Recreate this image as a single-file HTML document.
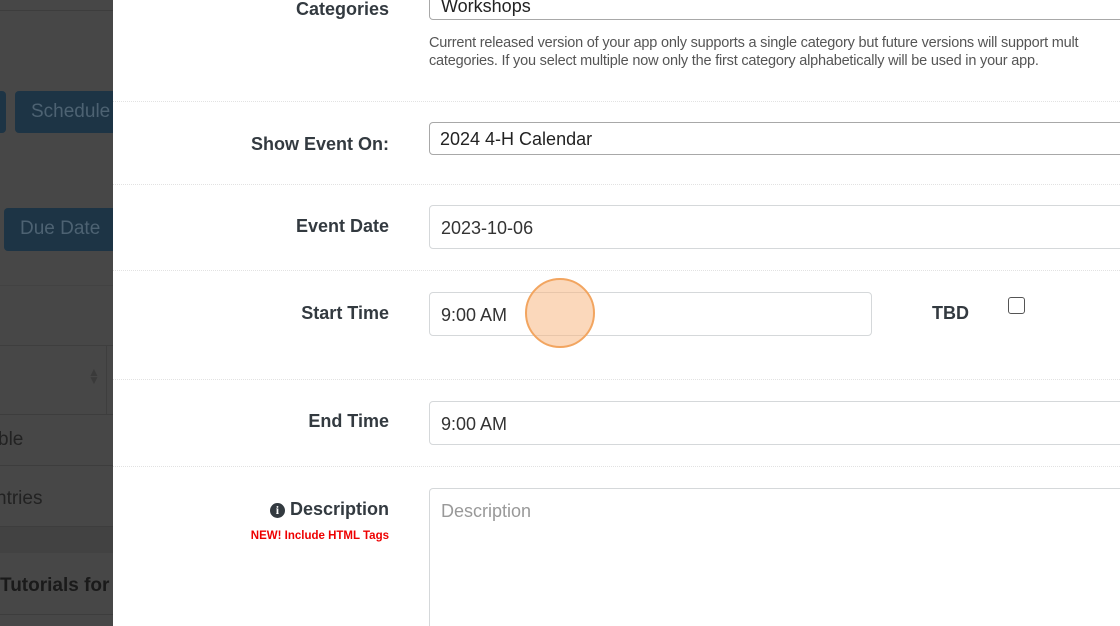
<!DOCTYPE html>
<html style="margin:0;width:1120px;height:626px;overflow:hidden"><head><style>
body{margin:0;width:1120px;height:626px;overflow:hidden;background:#fff;font-family:"Liberation Sans",sans-serif;position:relative}
.a{position:absolute}
.left{left:0;top:0;width:113px;height:626px;background:#474747;overflow:hidden}
.btn{position:absolute;background:#1d3445;color:#4d6272;font-size:19px;border-radius:4px;line-height:42px}
.lbl{position:absolute;right:731px;font-weight:bold;color:#333a40;font-size:18px;text-align:right;white-space:nowrap}
.inp{position:absolute;left:429px;right:-10px;border:1px solid #d5d8da;border-radius:4px;font-size:18px;color:#333;padding-left:11px;box-sizing:border-box}
.sep{position:absolute;left:113px;right:0;border-top:1px dotted #e2e2e2}
.ll{position:absolute;left:0;width:113px;border-top:1px solid #3d3d3d}
</style></head><body>
<div class="a left">
 <div class="ll" style="top:10px"></div>
 <div class="btn" style="left:-6px;top:91px;width:12px;height:42px"></div>
 <div class="btn" style="left:15px;top:91px;width:110px;height:42px;padding-left:16px">Schedule</div>
 <div class="btn" style="left:4px;top:208px;width:120px;height:43px;padding-left:16px">Due Date</div>
 <div class="ll" style="top:285px;border-color:#424242"></div>
 <div class="ll" style="top:345px;border-color:#3e3e3e"></div>
 <div class="a" style="left:106px;top:345px;width:1px;height:70px;background:#3e3e3e"></div>
 <div class="a" style="left:88px;top:368px;color:#3a3a3a;font-size:12px;line-height:8px">▲<br>▼</div>
 <div class="ll" style="top:414px"></div>
 <div class="a" style="left:-2px;top:429px;color:#222;font-size:19px">ble</div>
 <div class="ll" style="top:465px"></div>
 <div class="a" style="left:-4px;top:488px;color:#222;font-size:19px">ntries</div>
 <div class="ll" style="top:526px"></div>
 <div class="a" style="left:0;top:527px;width:113px;height:26px;background:#424242"></div>
 <div class="a" style="left:0;top:575px;color:#1a1a1a;font-size:19px;font-weight:bold;white-space:nowrap">Tutorials for Ev</div>
 <div class="ll" style="top:614px"></div>
</div>
<div class="lbl" style="top:-1px">Categories</div>
<div class="inp" style="top:-14px;height:34px;border-color:#a8a8a8;line-height:38px;font-size:18px;color:#222">Workshops</div>
<div class="a" style="left:429px;top:34px;font-size:14.5px;color:#555;line-height:18px;white-space:nowrap;letter-spacing:-0.2px">Current released version of your app only supports a single category but future versions will support mult<br>categories. If you select multiple now only the first category alphabetically will be used in your app.</div>
<div class="sep" style="top:101px"></div>
<div class="lbl" style="top:134px">Show Event On:</div>
<div class="inp" style="top:122px;height:33px;border-color:#a8a8a8;line-height:33px;padding-left:10px;color:#222">2024 4-H Calendar</div>
<div class="sep" style="top:184px"></div>
<div class="lbl" style="top:216px">Event Date</div>
<div class="inp" style="top:205px;height:44px;line-height:44px">2023-10-06</div>
<div class="sep" style="top:270px"></div>
<div class="lbl" style="top:303px">Start Time</div>
<div class="inp" style="top:292px;height:44px;line-height:44px;right:248px">9:00 AM</div>
<div class="a" style="left:932px;top:303px;font-weight:bold;font-size:18px;color:#333a40">TBD</div>
<div class="a" style="left:1008px;top:297px;width:15px;height:15px;border:1px solid #555;border-radius:3px"></div>
<div class="a" style="left:525px;top:278px;width:66px;height:66px;border-radius:50%;background:rgba(247,184,132,.55);border:2px solid #f2a560"></div>
<div class="sep" style="top:379px"></div>
<div class="lbl" style="top:411px">End Time</div>
<div class="inp" style="top:401px;height:44px;line-height:44px">9:00 AM</div>
<div class="sep" style="top:466px"></div>
<div class="lbl" style="top:499px"><span style="display:inline-block;width:15px;height:15px;border-radius:50%;background:#333a40;color:#fff;font-size:12px;line-height:15px;text-align:center;font-family:'Liberation Serif',serif;vertical-align:1px">i</span> Description</div>
<div class="a" style="right:731px;top:530px;color:#e00;font-size:11.5px;font-weight:bold">NEW! Include HTML Tags</div>
<div class="inp" style="top:488px;height:138px;padding-top:12px;color:#999;border-bottom:none;border-radius:4px 0 0 0">Description</div>
</body></html>
